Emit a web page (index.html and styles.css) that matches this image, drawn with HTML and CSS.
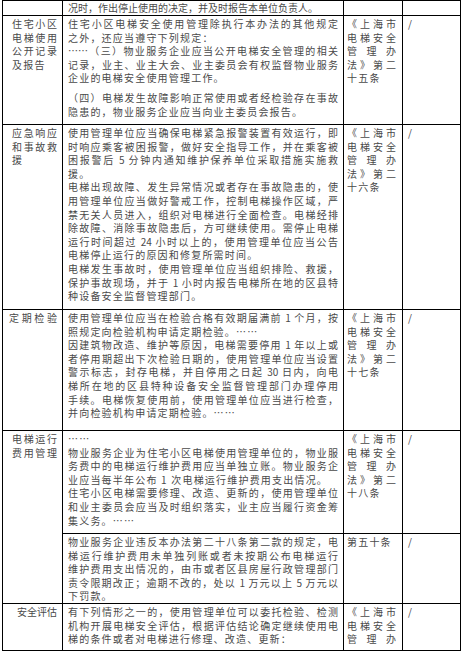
FILE: index.html
```html
<!DOCTYPE html>
<html lang="zh-CN">
<head>
<meta charset="utf-8">
<title>电梯安全管理</title>
<link rel="stylesheet" href="styles.css">
</head>
<body>
<table class="sheet">
  <colgroup>
    <col class="c-label"><col class="c-text"><col class="c-ref"><col class="c-note">
  </colgroup>
  <tr class="r0">
    <td class="lab"></td>
    <td class="txt"><span class="ln tail first">况时，作出停止使用的决定，并及时报告本单位负责人。</span></td>
    <td class="ref"></td>
    <td class="note"></td>
  </tr>
  <tr class="r1">
    <td class="lab"><span class="ln">住宅小区</span><span class="ln">电梯使用</span><span class="ln">公开记录</span><span class="ln tail">及报告</span></td>
    <td class="txt">
      <span class="ln">住宅小区电梯安全使用管理除执行本办法的其他规定</span>
      <span class="ln tail">之外，还应当遵守下列规定：</span>
      <span class="ln">……（三）物业服务企业应当公开电梯安全管理的相关</span>
      <span class="ln">记录，业主、业主大会、业主委员会有权监督物业服务</span>
      <span class="ln tail">企业的电梯安全使用管理工作。</span>
      <span class="ln gap">（四）电梯发生故障影响正常使用或者经检验存在事故</span>
      <span class="ln tail">隐患的，物业服务企业应当向业主委员会报告。</span>
    </td>
    <td class="ref"><span class="ln">《上海市</span><span class="ln">电梯安全</span><span class="ln">管理办</span><span class="ln">法》第二</span><span class="ln tail">十五条</span></td>
    <td class="note">/</td>
  </tr>
  <tr class="r2">
    <td class="lab"><span class="ln">应急响应</span><span class="ln">和事故救</span><span class="ln tail">援</span></td>
    <td class="txt">
      <span class="ln">使用管理单位应当确保电梯紧急报警装置有效运行，即</span>
      <span class="ln">时响应乘客被困报警，做好安全指导工作，并在乘客被</span>
      <span class="ln">困报警后 5 分钟内通知维护保养单位采取措施实施救</span>
      <span class="ln tail">援。</span>
      <span class="ln">电梯出现故障、发生异常情况或者存在事故隐患的，使</span>
      <span class="ln">用管理单位应当做好警戒工作，控制电梯操作区域，严</span>
      <span class="ln">禁无关人员进入，组织对电梯进行全面检查。电梯经排</span>
      <span class="ln">除故障、消除事故隐患后，方可继续使用。需停止电梯</span>
      <span class="ln">运行时间超过 24 小时以上的，使用管理单位应当公告</span>
      <span class="ln tail">电梯停止运行的原因和修复所需时间。</span>
      <span class="ln">电梯发生事故时，使用管理单位应当组织排险、救援，</span>
      <span class="ln">保护事故现场，并于 1 小时内报告电梯所在地的区县特</span>
      <span class="ln tail">种设备安全监督管理部门。</span>
    </td>
    <td class="ref"><span class="ln">《上海市</span><span class="ln">电梯安全</span><span class="ln">管理办</span><span class="ln">法》第二</span><span class="ln tail">十六条</span></td>
    <td class="note">/</td>
  </tr>
  <tr class="r3">
    <td class="lab lab-wide"><span class="ln">定期检验</span></td>
    <td class="txt">
      <span class="ln">使用管理单位应当在检验合格有效期届满前 1 个月，按</span>
      <span class="ln tail">照规定向检验机构申请定期检验。……</span>
      <span class="ln">因建筑物改造、维护等原因，电梯需要停用 1 年以上或</span>
      <span class="ln">者停用期超出下次检验日期的，使用管理单位应当设置</span>
      <span class="ln">警示标志，封存电梯，并自停用之日起 30 日内，向电</span>
      <span class="ln">梯所在地的区县特种设备安全监督管理部门办理停用</span>
      <span class="ln">手续。电梯恢复使用前，使用管理单位应当进行检查，</span>
      <span class="ln tail">并向检验机构申请定期检验。……</span>
    </td>
    <td class="ref"><span class="ln">《上海市</span><span class="ln">电梯安全</span><span class="ln">管理办</span><span class="ln">法》第二</span><span class="ln tail">十七条</span></td>
    <td class="note">/</td>
  </tr>
  <tr class="r4">
    <td class="lab" rowspan="2"><span class="ln">电梯运行</span><span class="ln">费用管理</span></td>
    <td class="txt">
      <span class="ln tail">……</span>
      <span class="ln">物业服务企业为住宅小区电梯使用管理单位的，物业服</span>
      <span class="ln">务费中的电梯运行维护费用应当单独立账。物业服务企</span>
      <span class="ln tail">业应当每半年公布 1 次电梯运行维护费用支出情况。</span>
      <span class="ln">住宅小区电梯需要修理、改造、更新的，使用管理单位</span>
      <span class="ln">和业主委员会应当及时组织落实，业主应当履行资金筹</span>
      <span class="ln tail">集义务。……</span>
    </td>
    <td class="ref"><span class="ln">《上海市</span><span class="ln">电梯安全</span><span class="ln">管理办</span><span class="ln">法》第二</span><span class="ln tail">十八条</span></td>
    <td class="note">/</td>
  </tr>
  <tr class="r5">
    <td class="txt">
      <span class="ln">物业服务企业违反本办法第二十八条第二款的规定，电</span>
      <span class="ln">梯运行维护费用未单独列账或者未按期公布电梯运行</span>
      <span class="ln">维护费用支出情况的，由市或者区县房屋行政管理部门</span>
      <span class="ln">责令限期改正；逾期不改的，处以 1 万元以上 5 万元以</span>
      <span class="ln tail">下罚款。</span>
    </td>
    <td class="ref"><span class="ln tail">第五十条</span></td>
    <td class="note">/</td>
  </tr>
  <tr class="r6">
    <td class="lab lab-narrow"><span class="ln">安全评估</span></td>
    <td class="txt">
      <span class="ln">有下列情形之一的，使用管理单位可以委托检验、检测</span>
      <span class="ln">机构开展电梯安全评估，根据评估结论确定继续使用电</span>
      <span class="ln tail">梯的条件或者对电梯进行修理、改造、更新：</span>
    </td>
    <td class="ref"><span class="ln">《上海市</span><span class="ln">电梯安全</span><span class="ln">管理办</span></td>
    <td class="note">/</td>
  </tr>
</table>
</body>
</html>
```

FILE: styles.css
```css
html, body {
  margin: 0;
  padding: 0;
  background: #ffffff;
}

body {
  font-family: "Noto Sans CJK SC", "Noto Sans", sans-serif;
  font-size: 10px;
  line-height: 13.6px;
  color: #4a4a4a;
}

.sheet {
  border-collapse: collapse;
  table-layout: fixed;
  width: 458px;
  margin-left: 2px;
}

.c-label { width: 60px; }
.c-text { width: 281px; }
.c-ref { width: 59px; }
.c-note { width: 58px; }

.sheet td {
  border: 1px solid #000000;
  vertical-align: top;
  padding: 1px 4px 0 5px;
  overflow: hidden;
}

.sheet td.lab { padding-left: 9px; padding-right: 5px; }
.sheet td.lab-wide { padding-left: 6px; }
.sheet td.lab-narrow { padding-left: 14px; }
.sheet td.txt { padding-left: 5px; padding-right: 5px; }
.sheet td.ref { padding-left: 3px; padding-right: 6px; }
.sheet td.note { padding-left: 5px; }

.r0 { height: 15px; }
.r1 { height: 109px; }
.r2 { height: 185px; }
.r3 { height: 121px; }
.r4 { height: 103px; }
.r5 { height: 68px; }
.r6 { height: 47px; }

.r0 td { padding-top: 0; }

.ln {
  display: block;
  text-align: justify;
  text-align-last: justify;
  letter-spacing: 0;
}

.ln.tail {
  text-align-last: start;
  letter-spacing: 1.2px;
}

.ln.first { letter-spacing: 0; }
.ln.gap { margin-top: 6px; }
```
